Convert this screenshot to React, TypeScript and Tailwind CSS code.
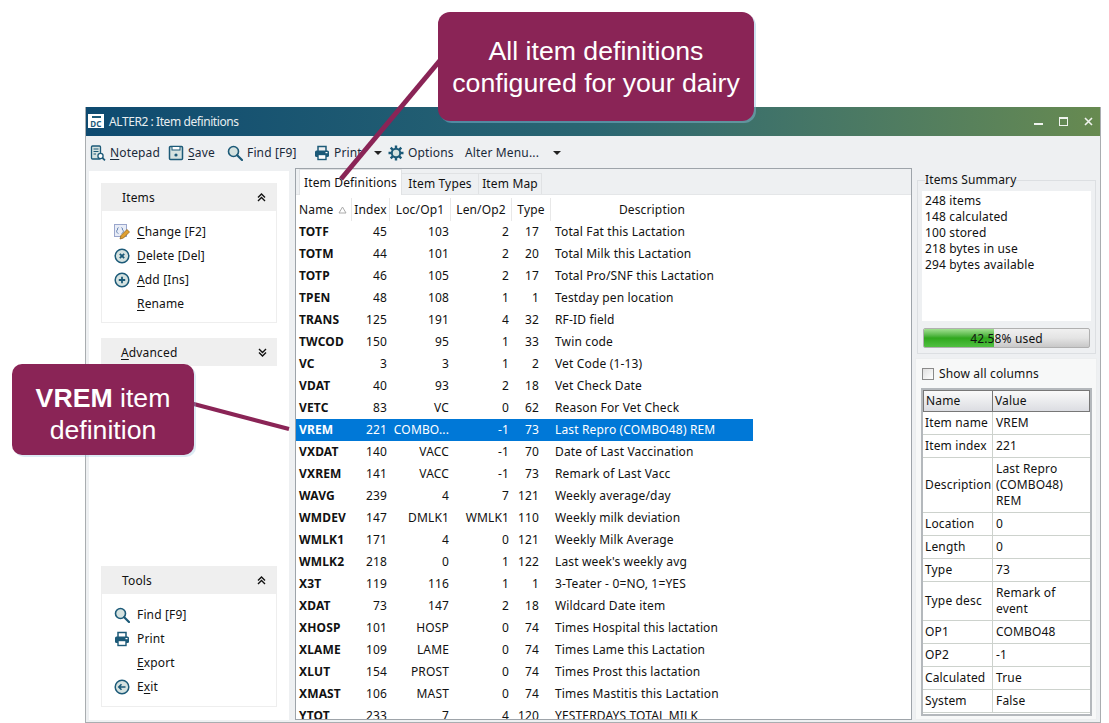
import React from "react";

const rows: [string, string, string, string, string, string][] = [
  ["TOTF", "45", "103", "2", "17", "Total Fat this Lactation"],
  ["TOTM", "44", "101", "2", "20", "Total Milk this Lactation"],
  ["TOTP", "46", "105", "2", "17", "Total Pro/SNF this Lactation"],
  ["TPEN", "48", "108", "1", "1", "Testday pen location"],
  ["TRANS", "125", "191", "4", "32", "RF-ID field"],
  ["TWCOD", "150", "95", "1", "33", "Twin code"],
  ["VC", "3", "3", "1", "2", "Vet Code (1-13)"],
  ["VDAT", "40", "93", "2", "18", "Vet Check Date"],
  ["VETC", "83", "VC", "0", "62", "Reason For Vet Check"],
  ["VREM", "221", "COMBO...", "-1", "73", "Last Repro (COMBO48) REM"],
  ["VXDAT", "140", "VACC", "-1", "70", "Date of Last Vaccination"],
  ["VXREM", "141", "VACC", "-1", "73", "Remark of Last Vacc"],
  ["WAVG", "239", "4", "7", "121", "Weekly average/day"],
  ["WMDEV", "147", "DMLK1", "WMLK1", "110", "Weekly milk deviation"],
  ["WMLK1", "171", "4", "0", "121", "Weekly Milk Average"],
  ["WMLK2", "218", "0", "1", "122", "Last week's weekly avg"],
  ["X3T", "119", "116", "1", "1", "3-Teater - 0=NO, 1=YES"],
  ["XDAT", "73", "147", "2", "18", "Wildcard Date item"],
  ["XHOSP", "101", "HOSP", "0", "74", "Times Hospital this lactation"],
  ["XLAME", "109", "LAME", "0", "74", "Times Lame this Lactation"],
  ["XLUT", "154", "PROST", "0", "74", "Times Prost this lactation"],
  ["XMAST", "106", "MAST", "0", "74", "Times Mastitis this Lactation"],
  ["YTOT", "233", "7", "4", "120", "YESTERDAYS TOTAL MILK"],
];

const props: [string, string, string][] = [
  ["Item name", "VREM", "h-[23px]"],
  ["Item index", "221", "h-[23px]"],
  ["Description", "Last Repro (COMBO48) REM", "h-[55px]"],
  ["Location", "0", "h-[23px]"],
  ["Length", "0", "h-[23px]"],
  ["Type", "73", "h-[23px]"],
  ["Type desc", "Remark of event", "h-[39px]"],
  ["OP1", "COMBO48", "h-[23px]"],
  ["OP2", "-1", "h-[23px]"],
  ["Calculated", "True", "h-[23px]"],
  ["System", "False", "h-[23px]"],
];

const T = "#1c5a78";
const L = "#d5e2e0";

function Mag({ s = 16 }: { s?: number }) {
  return (
    <svg width={s} height={s} viewBox="0 0 16 16" className="shrink-0">
      <circle cx="6.5" cy="6.5" r="5" fill={L} stroke={T} strokeWidth="1.6" />
      <path d="M10.2 10.2 15 15" stroke={T} strokeWidth="2.2" strokeLinecap="round" />
    </svg>
  );
}
function Printer() {
  return (
    <svg width="16" height="16" viewBox="0 0 16 16" className="shrink-0">
      <path d="M4 6V1.500h8V6" fill="none" stroke={T} strokeWidth="1.500" />
      <rect x="1" y="5.500" width="14" height="6.500" rx="1.500" fill={T} />
      <rect x="4" y="9.500" width="8" height="5" fill="#fff" stroke={T} strokeWidth="1.400" />
      <rect x="11.500" y="7" width="2" height="1.200" fill="#fff" />
    </svg>
  );
}
function Floppy() {
  return (
    <svg width="16" height="16" viewBox="0 0 16 16" className="shrink-0">
      <path d="M1.500 2.500a1 1 0 0 1 1-1h11a1 1 0 0 1 1 1v11a1 1 0 0 1-1 1h-11a1 1 0 0 1-1-1z" fill={L} stroke={T} strokeWidth="1.500" />
      <rect x="4" y="1.500" width="8" height="3.500" fill="#fff" stroke={T} strokeWidth="1" />
      <circle cx="8" cy="10" r="1.600" fill={T} />
    </svg>
  );
}
function Notepad() {
  return (
    <svg width="16" height="16" viewBox="0 0 16 16" className="shrink-0">
      <rect x="1.500" y="1" width="9" height="13" rx="1" fill={L} stroke={T} strokeWidth="1.300" />
      <path d="M3.500 4h5M3.500 6.500h5M3.500 9h2.500" stroke={T} strokeWidth="1" />
      <circle cx="10.500" cy="11" r="2.600" fill="#fff" stroke={T} strokeWidth="1.300" />
      <path d="M12.500 13 15 15.300" stroke={T} strokeWidth="1.700" />
    </svg>
  );
}
function Gear() {
  return (
    <svg width="16" height="16" viewBox="0 0 16 16" className="shrink-0">
      <g stroke={T} strokeWidth="2.400">
        <path d="M8 0.500v15M0.500 8h15M2.700 2.700l10.600 10.600M13.300 2.700 2.700 13.300" />
      </g>
      <circle cx="8" cy="8" r="5.200" fill={T} />
      <circle cx="8" cy="8" r="3.200" fill={L} />
    </svg>
  );
}
function Circ({ kind }: { kind: "x" | "plus" | "back" }) {
  return (
    <svg width="16" height="16" viewBox="0 0 16 16" className="shrink-0">
      <circle cx="8" cy="8" r="6.800" fill={L} stroke={T} strokeWidth="1.500" />
      {kind === "x" && <path d="M5.800 5.800l4.400 4.400M10.200 5.800l-4.400 4.400" stroke={T} strokeWidth="1.800" />}
      {kind === "plus" && <path d="M8 4.800v6.400M4.800 8h6.400" stroke={T} strokeWidth="1.800" />}
      {kind === "back" && <path d="M11.500 8H5M7.500 5.300 4.800 8l2.700 2.700" fill="none" stroke={T} strokeWidth="1.600" />}
    </svg>
  );
}
function EditIcon() {
  return (
    <svg width="16" height="16" viewBox="0 0 16 16" className="shrink-0">
      <rect x="0.500" y="0.500" width="12" height="12" fill="#e8ecf6" stroke="#9aa6cc" />
      <path d="M4.500 3.500c-1.500 0-.5 3-1.500 3s0 3 1.500 3M7.500 3.500c1.500 0 .5 3 1.500 3s0 3-1.500 3" fill="none" stroke="#4a6fa5" strokeWidth=".8" />
      <path d="M6 15l1-3.500L13 5.500l2.500 2.500-6 6z" fill="#e0a030" stroke="#8a5a10" strokeWidth=".7" />
    </svg>
  );
}
function Chevrons({ up }: { up: boolean }) {
  return (
    <svg width="9" height="9" viewBox="0 0 9 9" className={up ? "" : "rotate-180"}>
      <path d="M1 4.500 4.500 1 8 4.500M1 8 4.500 4.500 8 8" fill="none" stroke="#111" strokeWidth="1.400" />
    </svg>
  );
}
function Caret() {
  return <span className="w-0 h-0 border-l-[4px] border-r-[4px] border-t-[4px] border-l-transparent border-r-transparent border-t-[#222]" />;
}

function U({ children }: { children: React.ReactNode }) {
  return <span className="underline underline-offset-2">{children}</span>;
}

function PanelRow({ icon, children }: { icon?: React.ReactNode; children: React.ReactNode }) {
  return (
    <div className="h-6 flex items-center">
      <span className="w-[16px] mr-[7px] flex justify-center">{icon}</span>
      <span>{children}</span>
    </div>
  );
}

function PanelHead({ children, up }: { children: React.ReactNode; up: boolean }) {
  return (
    <div className="h-[28px] bg-[#efefef] flex items-center justify-between pl-5 pr-[10px]">
      <span className="pt-px">{children}</span>
      <Chevrons up={up} />
    </div>
  );
}

function ToolItem({ icon, children, className = "" }: { icon?: React.ReactNode; children: React.ReactNode; className?: string }) {
  return (
    <div className={"flex items-center gap-[4px] " + className}>
      {icon}
      <span className="whitespace-nowrap">{children}</span>
    </div>
  );
}

export default function App() {
  return (
    <div className="relative w-[1109px] h-[723px] overflow-hidden bg-white text-[12px] tracking-[0.15px] text-[#111] font-['Noto_Sans','DejaVu_Sans',sans-serif]">
      <div className="pl-[85px] pt-[107px] h-full">
        <div className="w-[1016px] h-[616px] flex flex-col border-x border-b border-[#a9adb0] bg-[#eef0f2]">
          <div className="h-[29px] shrink-0 flex items-center justify-between bg-gradient-to-r from-[#0e4a70] via-[#2a6672] to-[#678a50] pl-[2px] pr-[7px] text-white/90">
            <div className="flex items-center gap-[5px]">
              <div className="w-4 h-[14px] mb-px bg-white flex flex-col items-center justify-between text-[8px] leading-[8px] font-bold text-[#1c5a78]">
                <span className="w-[9px] h-[2px] mt-[2px] bg-[#1c5a78]" />
                <span>DC</span>
              </div>
              <span className="text-[#e8eef0] tracking-[-0.42px]">ALTER2 : Item definitions</span>
            </div>
            <div className="flex items-center gap-[16px]">
              <span className="w-[9px] h-[2px] bg-white/90 mt-1" />
              <span className="w-[9px] h-[9px] border border-white/90 border-t-2" />
              <svg width="9" height="9" viewBox="0 0 9 9"><path d="M1 1l7 7M8 1 1 8" stroke="#fff" strokeOpacity=".9" strokeWidth="1.600" /></svg>
            </div>
          </div>
          <div className="h-[32px] shrink-0 flex items-center pl-[4px] pt-px text-[#1a2a3a]">
            <ToolItem icon={<Notepad />} className="w-[78px]"><U>N</U>otepad</ToolItem>
            <ToolItem icon={<Floppy />} className="w-[59px]"><U>S</U>ave</ToolItem>
            <ToolItem icon={<Mag />} className="w-[87px]">Find [F9]</ToolItem>
            <ToolItem icon={<Printer />} className="w-[60px]">Print</ToolItem>
            <Caret />
            <ToolItem icon={<Gear />} className="ml-[6px] w-[77px]">Options</ToolItem>
            <span className="w-[88px] whitespace-nowrap">Alter Menu...</span>
            <Caret />
          </div>
          <div className="flex-1 min-h-0 flex">
            <div className="w-[200px] ml-[3px] mt-[3px] mb-[2px] bg-white shrink-0 px-3 pt-3 pb-[13px] flex flex-col">
              <div className="border border-t-0 border-[#eeeeee]">
                <PanelHead up>Items</PanelHead>
                <div className="px-3 pt-[9px] pb-[6px]">
                  <PanelRow icon={<EditIcon />}><U>C</U>hange [F2]</PanelRow>
                  <PanelRow icon={<Circ kind="x" />}><U>D</U>elete [Del]</PanelRow>
                  <PanelRow icon={<Circ kind="plus" />}><U>A</U>dd [Ins]</PanelRow>
                  <PanelRow><U>R</U>ename</PanelRow>
                </div>
              </div>
              <div className="mt-[15px]">
                <PanelHead up={false}><U>A</U>dvanced</PanelHead>
              </div>
              <div className="mt-auto border border-t-0 border-[#eeeeee]">
                <PanelHead up>Tools</PanelHead>
                <div className="px-3 pt-[9px] pb-[7px]">
                  <PanelRow icon={<Mag />}>Find [F9]</PanelRow>
                  <PanelRow icon={<Printer />}>Print</PanelRow>
                  <PanelRow><U>E</U>xport</PanelRow>
                  <PanelRow icon={<Circ kind="back" />}>E<U>x</U>it</PanelRow>
                </div>
              </div>
            </div>
            <div className="w-[617px] ml-[6px] mb-[2px] border border-[#9ea4aa] bg-white shrink-0 flex flex-col overflow-hidden">
              <div className="h-[26px] shrink-0 bg-[#eef0f2] flex items-end border-b border-[#e4e6e8] pl-[3px]">
                <div className="h-[26px] w-[103px] flex items-center justify-center bg-white border border-b-0 border-[#e0e2e4] -mb-px whitespace-nowrap">Item Definitions</div>
                <div className="h-[21px] w-[77px] flex items-center justify-center border-r border-t border-[#e0e2e4] whitespace-nowrap">Item Types</div>
                <div className="h-[21px] w-[63px] flex items-center justify-center border-r border-t border-[#e0e2e4] whitespace-nowrap">Item Map</div>
              </div>
              <div className="h-[26px] shrink-0 flex items-center w-[457px] pt-[3px]">
                <div className="w-[56px] h-full pl-[3px] flex items-center justify-between pr-1 border-r border-[#e8e8e8]">
                  Name
                  <svg width="9" height="8" viewBox="0 0 9 8"><path d="M4.500 1 8 7H1z" fill="none" stroke="#aaa" /></svg>
                </div>
                <div className="w-[38px] h-full flex items-center justify-center border-r border-[#e8e8e8]">Index</div>
                <div className="w-[61px] h-full flex items-center justify-center border-r border-[#e8e8e8]">Loc/Op1</div>
                <div className="w-[61px] h-full flex items-center justify-center border-r border-[#e8e8e8]">Len/Op2</div>
                <div className="w-[39px] h-full flex items-center justify-center border-r border-[#e8e8e8]">Type</div>
                <div className="flex-1 h-full flex items-center justify-center">Description</div>
              </div>
              <div className="flex-1 min-h-0 overflow-hidden">
                {rows.map((r) => {
                  const sel = r[0] === "VREM";
                  return (
                    <div key={r[0]} className={"h-[22px] w-[457px] flex items-center " + (sel ? "bg-[#0078d7] text-white" : "")}>
                      <div className="w-[56px] pl-[3px] font-bold">{r[0]}</div>
                      <div className="w-[38px] text-right pr-[3px]">{r[1]}</div>
                      <div className="w-[61px] text-right pr-[2px] whitespace-nowrap">{r[2]}</div>
                      <div className="w-[61px] text-right pr-[3px]">{r[3]}</div>
                      <div className="w-[39px] text-right pr-[12px]">{r[4]}</div>
                      <div className="flex-1 pl-[4px] whitespace-nowrap">{r[5]}</div>
                    </div>
                  );
                })}
              </div>
            </div>
            <div className="flex-1 min-w-0 flex flex-col px-[3px] mb-[2px]">
              <fieldset className="ml-[2px] mr-[1px] h-[180px] shrink-0 border border-[#dcdfe2] px-[4px] pt-[6px] pb-[3px] flex flex-col mt-[6px]">
                <legend className="ml-[3px] leading-[12px] -mb-px">Items Summary</legend>
                <div className="h-[130px] bg-white pl-[3px] pt-[2px] leading-[16px]">
                  <div>248 items</div>
                  <div>148 calculated</div>
                  <div>100 stored</div>
                  <div>218 bytes in use</div>
                  <div>294 bytes available</div>
                </div>
                <div className="relative mt-[7px] mx-[1px] h-[20px] border border-[#b0b0b0] rounded-[2px] bg-gradient-to-b from-[#f0f0f0] via-[#e4e4e4] to-[#c8c8c8] overflow-hidden">
                  <div className="absolute left-0 top-0 bottom-0 w-[42.58%] bg-gradient-to-b from-[#a0e090] via-[#2fa81c] to-[#50c040]" />
                  <div className="absolute inset-0 pt-px flex items-center justify-center">42.58% used</div>
                </div>
              </fieldset>
              <div className="mt-[4px] flex-1 min-h-0 bg-[#f7f8f8] border border-[#eceeef] px-[6px] flex flex-col overflow-hidden">
                <div className="h-[29px] shrink-0 flex items-center gap-[5px]">
                  <span className="w-3 h-3 border border-[#8a8a8a] bg-gradient-to-br from-[#e0e0e0] to-white" />
                  Show all columns
                </div>
                <div className="border-2 border-[#b4b8bc] bg-white -ml-[1px] -mr-[2px]">
                  <div className="flex h-[22px] bg-gradient-to-b from-[#fafafa] to-[#dcdde2] border border-[#777]">
                    <div className="w-[69px] pl-[2px] border-r border-[#777] flex items-center">Name</div>
                    <div className="flex-1 pl-[2px] flex items-center">Value</div>
                  </div>
                  {props.map((p) => (
                    <div key={p[0]} className={"flex border-b border-[#cdd2cd] " + p[2]}>
                      <div className="w-[70px] pl-[2px] border-r border-[#cdd2cd] flex items-center whitespace-nowrap">{p[0]}</div>
                      <div className="flex-1 pl-[3px] flex items-center leading-[16px]">{p[1]}</div>
                    </div>
                  ))}
                  <div className="h-px" />
                </div>
              </div>
            </div>
          </div>
        </div>
      </div>

      <svg width="1109" height="723" viewBox="0 0 1109 723" className="absolute inset-0 pointer-events-none">
        <path d="M442 58 341 179" stroke="#8a2456" strokeWidth="5" />
        <path d="M190 403 289 429" stroke="#8a2456" strokeWidth="4" />
      </svg>
      <div className="absolute left-[438px] top-[12px] w-[316px] h-[109px] rounded-[12px] bg-[#8a2456] shadow-[2px_2px_0_rgba(140,190,220,0.45)] flex items-center justify-center text-center text-white text-[26.67px] tracking-normal leading-[32px] font-['Liberation_Sans',sans-serif]">
        <div>All item definitions<br />configured for your dairy</div>
      </div>
      <div className="absolute left-[12px] top-[364px] w-[182px] h-[91px] pt-[8px] rounded-[10px] bg-[#8a2456] shadow-[2px_2px_0_rgba(140,190,220,0.3)] flex items-center justify-center text-center text-white text-[26.67px] tracking-normal leading-[32px] font-['Liberation_Sans',sans-serif]">
        <div><b>VREM</b> item<br />definition</div>
      </div>
    </div>
  );
}
